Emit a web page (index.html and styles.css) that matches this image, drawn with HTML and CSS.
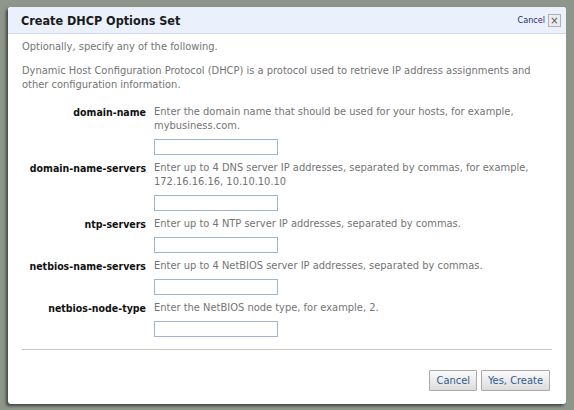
FILE: index.html
```html
<!DOCTYPE html>
<html>
<head>
<meta charset="utf-8">
<link rel="stylesheet" href="styles.css">
</head>
<body>
<div class="dialog">
  <div class="header">
    <div class="title">Create DHCP Options Set</div>
    <div class="header-actions">
      <a class="cancel-link" href="#">Cancel</a>
      <span class="close-box">×</span>
    </div>
  </div>
  <div class="body">
    <p class="intro">Optionally, specify any of the following.</p>
    <p class="intro">Dynamic Host Configuration Protocol (DHCP) is a protocol used to retrieve IP address assignments and other configuration information.</p>
    <div class="form">
      <div class="label">domain-name</div>
      <div class="field">
        <div class="desc">Enter the domain name that should be used for your hosts, for example, mybusiness.com.</div>
        <input class="input" type="text">
      </div>
      <div class="label">domain-name-servers</div>
      <div class="field">
        <div class="desc">Enter up to 4 DNS server IP addresses, separated by commas, for example, 172.16.16.16, 10.10.10.10</div>
        <input class="input" type="text">
      </div>
      <div class="label">ntp-servers</div>
      <div class="field">
        <div class="desc">Enter up to 4 NTP server IP addresses, separated by commas.</div>
        <input class="input" type="text">
      </div>
      <div class="label">netbios-name-servers</div>
      <div class="field">
        <div class="desc">Enter up to 4 NetBIOS server IP addresses, separated by commas.</div>
        <input class="input" type="text">
      </div>
      <div class="label">netbios-node-type</div>
      <div class="field">
        <div class="desc">Enter the NetBIOS node type, for example, 2.</div>
        <input class="input" type="text">
      </div>
    </div>
    <div class="divider"></div>
    <div class="buttons">
      <button class="btn">Cancel</button>
      <button class="btn">Yes, Create</button>
    </div>
  </div>
</div>
</body>
</html>
```
FILE: styles.css
```css
html, body {
  margin: 0;
  padding: 0;
}
body {
  width: 574px;
  height: 410px;
  background: #8e968b;
  padding: 7px 8px 6px 8px;
  box-sizing: border-box;
  font-family: "DejaVu Sans Condensed", "DejaVu Sans", sans-serif;
  font-size: 11px;
}
.dialog {
  height: 397px;
  background: #fff;
  border-radius: 3px;
  box-shadow: -2px 2px 3px rgba(40, 44, 38, 0.75);
  overflow: hidden;
  display: flex;
  flex-direction: column;
}
.header {
  height: 26px;
  background: #eaf1fc;
  border-bottom: 1px solid #cfdbec;
  display: flex;
  align-items: center;
  justify-content: space-between;
  padding: 0 5px 0 13px;
}
.title {
  font-weight: bold;
  font-size: 12.5px;
  color: #1a1a1a;
}
.header-actions {
  display: flex;
  align-items: center;
  gap: 3px;
}
.cancel-link {
  color: #1b2a78;
  text-decoration: none;
  font-size: 9px;
}
.close-box {
  width: 11px;
  height: 11px;
  border: 1px solid #b0b0b0;
  background: #ececec;
  color: #555;
  font-size: 11px;
  line-height: 11px;
  text-align: center;
}
.body {
  padding: 6px 14px 0 14px;
  color: #747474;
  line-height: 14px;
  display: flex;
  flex-direction: column;
}
.intro {
  margin: 0 0 10px 0;
}
.form {
  display: grid;
  grid-template-columns: 124px 1fr;
  column-gap: 8px;
  row-gap: 6px;
  margin-top: 3px;
}
.label {
  text-align: right;
  font-weight: bold;
  font-size: 10.5px;
  color: #111;
}
.field {
  display: flex;
  flex-direction: column;
  align-items: flex-start;
}
.input {
  margin: 6px 0 0 0;
  width: 124px;
  height: 16px;
  box-sizing: border-box;
  border: 1px solid #9fb4cf;
  padding: 0;
  background: #fff;
}
.divider {
  height: 1px;
  background: #c8c8c8;
  margin-top: 12px;
}
.buttons {
  display: flex;
  justify-content: flex-end;
  gap: 4px;
  margin-top: 20px;
  padding-right: 2px;
}
.btn {
  height: 21px;
  padding: 0 6px;
  border: 1px solid #a9a9a9;
  border-radius: 1px;
  background: linear-gradient(#fbfbfb, #dcdcdc);
  color: #2d5c8e;
  font-family: "DejaVu Sans Condensed", "DejaVu Sans", sans-serif;
  font-size: 11px;
}
```
